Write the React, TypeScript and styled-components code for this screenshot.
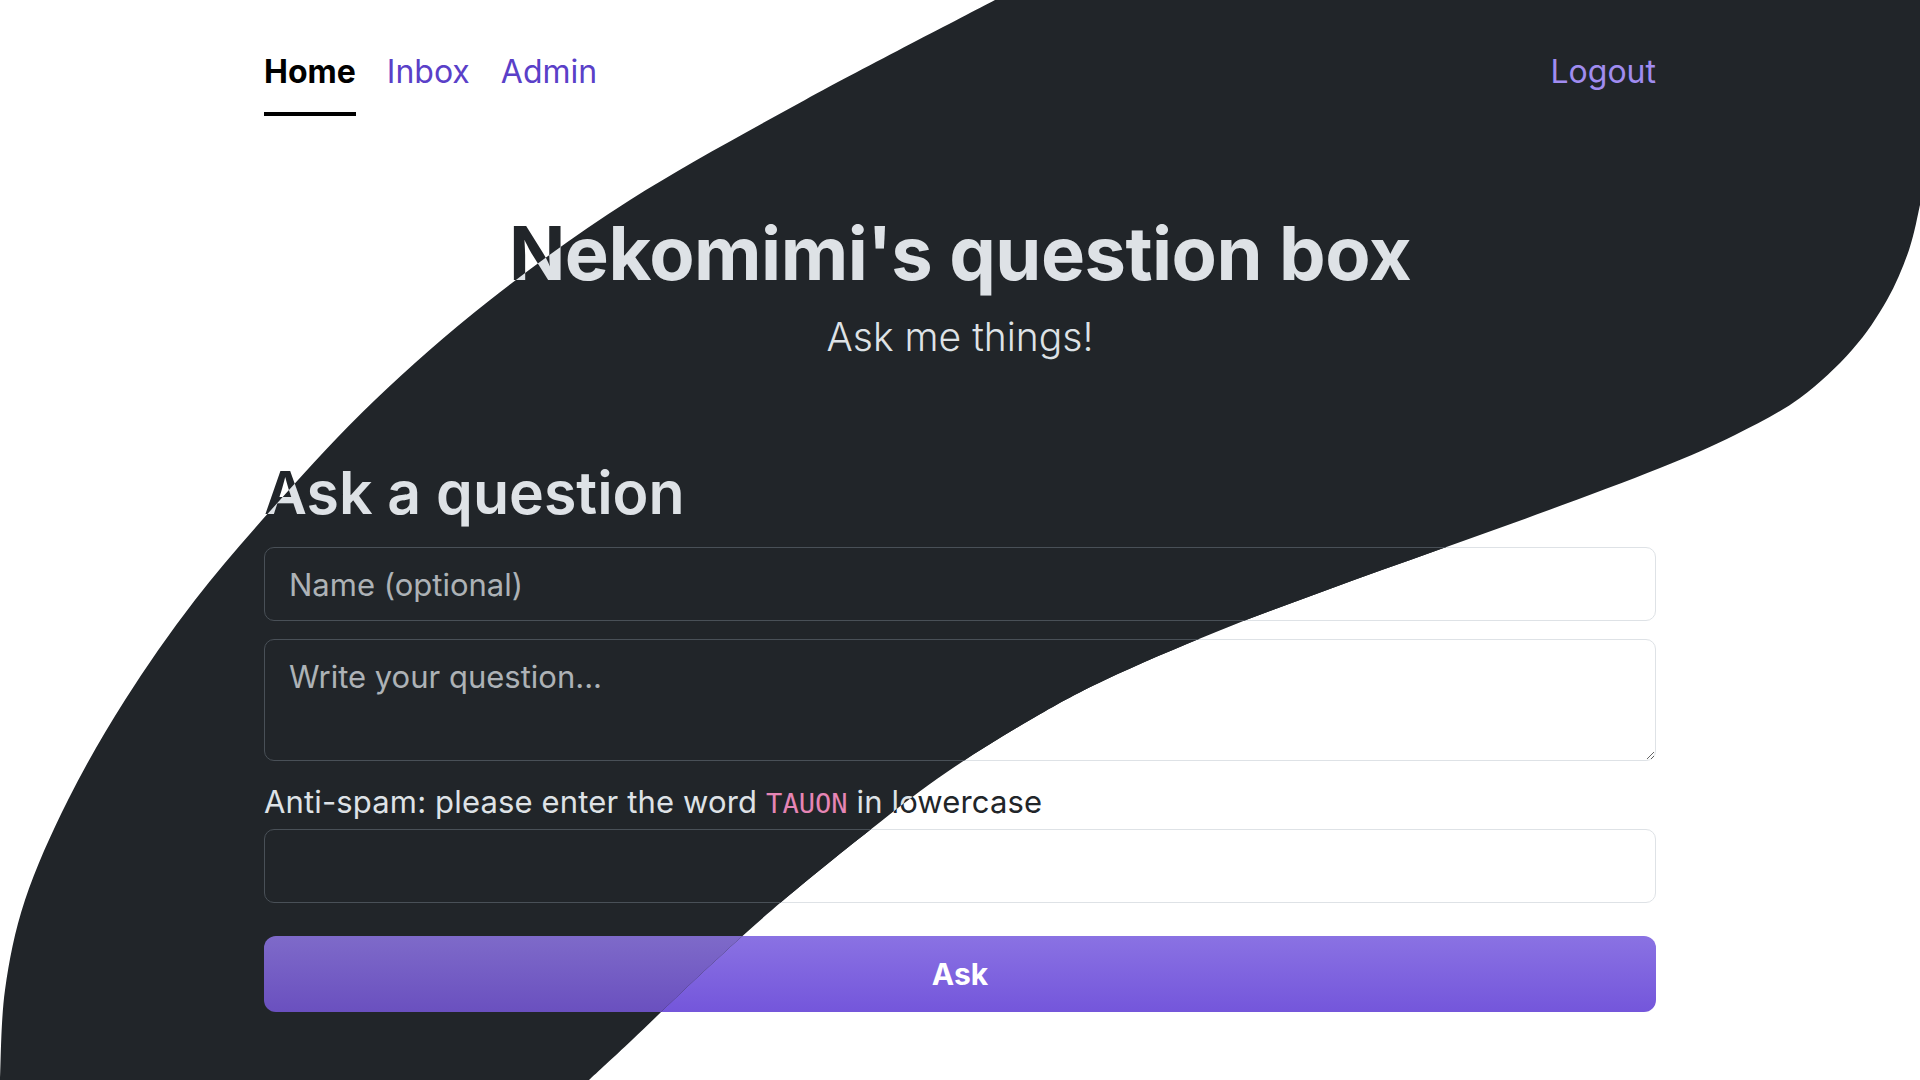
import React from 'react';
import styled, { createGlobalStyle, ThemeProvider } from 'styled-components';

type Pt = [number, number];

const lowerEdge: Pt[] = [
  [1920, 205], [1909, 250], [1887, 300], [1852, 350], [1800, 398], [1735, 435],
  [1660, 468], [1549, 510], [1438, 550], [1327, 590], [1216, 632], [1105, 680],
  [1030, 720], [947, 772], [870, 830], [772, 910], [700, 975], [632, 1040], [589, 1080],
];

const upperEdge: Pt[] = [
  [0, 1080], [5, 990], [25, 900], [68, 800], [125, 700], [195, 600], [280, 500],
  [375, 400], [490, 300], [630, 200], [805, 100], [995, 0],
];

function smooth(pts: Pt[]): string {
  let d = '';
  for (let i = 0; i < pts.length - 1; i++) {
    const p0 = pts[i - 1] || pts[i];
    const p1 = pts[i];
    const p2 = pts[i + 1];
    const p3 = pts[i + 2] || p2;
    const c1x = p1[0] + (p2[0] - p0[0]) / 6;
    const c1y = p1[1] + (p2[1] - p0[1]) / 6;
    const c2x = p2[0] - (p3[0] - p1[0]) / 6;
    const c2y = p2[1] - (p3[1] - p1[1]) / 6;
    d += ` C ${c1x.toFixed(1)} ${c1y.toFixed(1)} ${c2x.toFixed(1)} ${c2y.toFixed(1)} ${p2[0]} ${p2[1]}`;
  }
  return d;
}

const WAVE = `M ${lowerEdge[0][0]} ${lowerEdge[0][1]}${smooth(lowerEdge)} L 0 1080${smooth(upperEdge)} L 1920 0 Z`;

const lightTheme = {
  bg: '#ffffff',
  text: '#212529',
  emph: '#000000',
  link: '#5a40c8',
  border: '#dee2e6',
  placeholder: 'rgba(33, 37, 41, 0.75)',
  code: '#d63384',
  btnTop: '#8a72e3',
  btnBottom: '#7456db',
};

const darkTheme = {
  bg: '#212529',
  text: '#dee2e6',
  emph: '#ffffff',
  link: '#a08cf0',
  border: '#495057',
  placeholder: 'rgba(222, 226, 230, 0.75)',
  code: '#e685b5',
  btnTop: '#7e6ac9',
  btnBottom: '#6a50bf',
};

const GlobalStyle = createGlobalStyle`
  html, body {
    margin: 0;
    padding: 0;
  }
  body {
    font-family: Inter, "Noto Sans", "Liberation Sans", sans-serif;
    background: #ffffff;
    overflow: hidden;
  }
  * { box-sizing: border-box; }
`;

const Page = styled.div`
  position: relative;
  width: 100%;
  height: 100vh;
  overflow: hidden;
  background: #ffffff;
`;

const Layer = styled.div`
  width: 100%;
  height: 100%;
  background: ${(p) => p.theme.bg};
  color: ${(p) => p.theme.text};
`;

const DarkLayer = styled(Layer)`
  position: absolute;
  inset: 0;
  clip-path: path('${WAVE}');
`;

const Container = styled.div`
  width: 1392px;
  margin: 0 auto;
  display: flex;
  flex-direction: column;
`;

const Nav = styled.nav`
  display: flex;
  align-items: flex-start;
  gap: 31px;
  padding-top: 49px;
`;

const NavLink = styled.a<{ $active?: boolean; $end?: boolean }>`
  font-size: 32px;
  line-height: 45px;
  padding-bottom: 18px;
  border-bottom: 4px solid ${(p) => (p.$active ? p.theme.emph : 'transparent')};
  font-weight: ${(p) => (p.$active ? 700 : 400)};
  color: ${(p) => (p.$active ? p.theme.emph : p.theme.link)};
  text-decoration: none;
  margin-left: ${(p) => (p.$end ? 'auto' : '0')};
  cursor: pointer;
`;

const Header = styled.header`
  display: flex;
  flex-direction: column;
  align-items: center;
  margin-top: 95px;
`;

const Title = styled.h1`
  margin: 0;
  font-size: 74px;
  line-height: 84px;
  font-weight: 700;
  letter-spacing: -0.5px;
  color: ${(p) => p.theme.text};
`;

const Subtitle = styled.p`
  margin: 14px 0 0;
  font-size: 39px;
  line-height: 55px;
  font-weight: 300;
  color: ${(p) => p.theme.text};
`;

const Form = styled.form`
  display: flex;
  flex-direction: column;
  margin-top: 94px;
`;

const FormTitle = styled.h2`
  margin: 0 0 19px;
  font-size: 59px;
  line-height: 70px;
  font-weight: 600;
  color: ${(p) => p.theme.text};
`;

const fieldBase = `
  width: 100%;
  font-family: Inter, "Noto Sans", "Liberation Sans", sans-serif;
  font-size: 31px;
  line-height: 45px;
  border-radius: 10px;
  padding: 0 24px;
  outline: none;
`;

const TextInput = styled.input`
  ${fieldBase}
  height: 74px;
  background: ${(p) => p.theme.bg};
  color: ${(p) => p.theme.text};
  border: 1px solid ${(p) => p.theme.border};
  &::placeholder {
    color: ${(p) => p.theme.placeholder};
  }
`;

const TextArea = styled.textarea`
  ${fieldBase}
  height: 122px;
  margin-top: 18px;
  padding-top: 14px;
  padding-bottom: 14px;
  background: ${(p) => p.theme.bg};
  color: ${(p) => p.theme.text};
  border: 1px solid ${(p) => p.theme.border};
  resize: vertical;
  &::placeholder {
    color: ${(p) => p.theme.placeholder};
  }
`;

const Label = styled.label`
  margin: 20px 0 4px;
  font-size: 31px;
  line-height: 42px;
  letter-spacing: 0.15px;
  color: ${(p) => p.theme.text};
`;

const Code = styled.code`
  font-family: "DejaVu Sans Mono", "Liberation Mono", monospace;
  font-size: 0.875em;
  letter-spacing: 0;
  color: ${(p) => p.theme.code};
`;

const SubmitButton = styled.button`
  margin-top: 33px;
  height: 76px;
  width: 100%;
  border: none;
  border-radius: 12px;
  background: linear-gradient(180deg, ${(p) => p.theme.btnTop}, ${(p) => p.theme.btnBottom});
  color: #ffffff;
  font-family: Inter, "Noto Sans", "Liberation Sans", sans-serif;
  font-size: 30px;
  font-weight: 700;
  cursor: pointer;
`;

function Content() {
  return (
    <Container>
      <Nav>
        <NavLink $active>Home</NavLink>
        <NavLink>Inbox</NavLink>
        <NavLink>Admin</NavLink>
        <NavLink $end>Logout</NavLink>
      </Nav>
      <Header>
        <Title>Nekomimi's question box</Title>
        <Subtitle>Ask me things!</Subtitle>
      </Header>
      <Form onSubmit={(e) => e.preventDefault()}>
        <FormTitle>Ask a question</FormTitle>
        <TextInput type="text" placeholder="Name (optional)" />
        <TextArea placeholder="Write your question..." />
        <Label>
          Anti-spam: please enter the word <Code>TAUON</Code> in lowercase
        </Label>
        <TextInput type="text" />
        <SubmitButton type="submit">Ask</SubmitButton>
      </Form>
    </Container>
  );
}

export default function App() {
  return (
    <>
      <GlobalStyle />
      <Page>
        <ThemeProvider theme={lightTheme}>
          <Layer>
            <Content />
          </Layer>
        </ThemeProvider>
        <ThemeProvider theme={darkTheme}>
          <DarkLayer aria-hidden="true">
            <Content />
          </DarkLayer>
        </ThemeProvider>
      </Page>
    </>
  );
}
